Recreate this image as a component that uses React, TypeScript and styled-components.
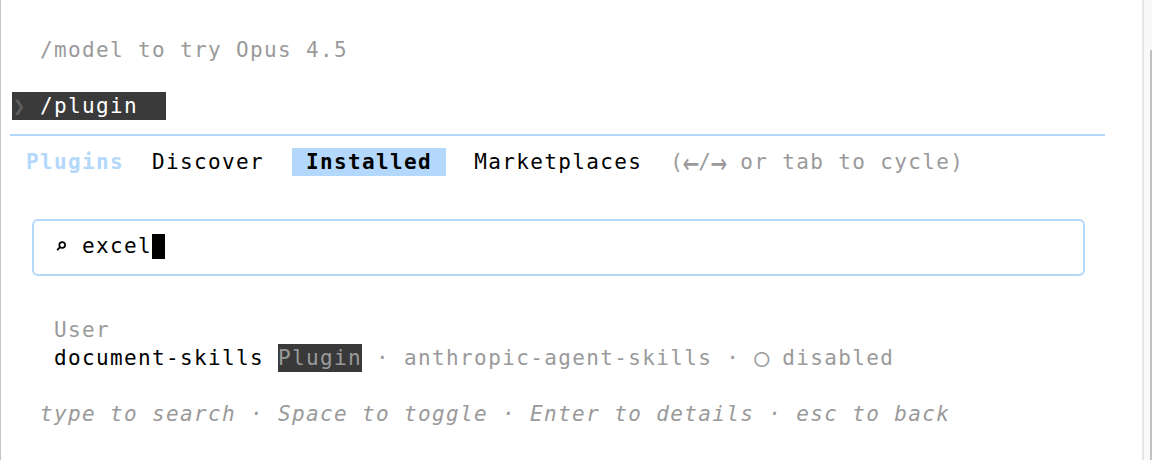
import styled, { createGlobalStyle } from "styled-components"

const GlobalStyle = createGlobalStyle`
  html, body {
    margin: 0;
    padding: 0;
    background: #ffffff;
    overflow: hidden;
  }
`

const BLUE = "#b3d8fb"
const GRAY = "#9a9a9a"

const Window = styled.div`
  display: flex;
  width: 1152px;
  height: 460px;
`

const Terminal = styled.div`
  flex: 1;
  border-left: 1px solid #c4c4c4;
  padding: 36px 0 0 11px;
  font-family: "DejaVu Sans Mono", "Liberation Mono", monospace;
  font-size: 21px;
  letter-spacing: 1.36px;
  color: #000;
`

const Gutter = styled.div`
  width: 8px;
  border-left: 2px solid #e6e6e6;
  background: #f9f9f9;
  padding-top: 50px;
  display: flex;
  justify-content: flex-end;
`

const Thumb = styled.div`
  width: 2px;
  background: #c2c2c2;
`

const Row = styled.div`
  height: 28px;
  line-height: 28px;
  white-space: pre;
  display: flex;
  align-items: center;
`

const Text = styled.span<{ $tone?: "gray" | "blue" | "dim" | "white"; $bold?: boolean; $italic?: boolean }>`
  color: ${(p) =>
    p.$tone === "gray"
      ? GRAY
      : p.$tone === "blue"
        ? BLUE
        : p.$tone === "dim"
          ? "#5e5e5e"
          : p.$tone === "white"
            ? "#fff"
            : "#000"};
  font-weight: ${(p) => (p.$bold ? 700 : 400)};
  font-style: ${(p) => (p.$italic ? "italic" : "normal")};
`

const Highlight = styled.span<{ $bg: string }>`
  display: inline-flex;
  align-items: center;
  height: 28px;
  background: ${(p) => p.$bg};
`

const Cell = styled.span<{ $size?: number }>`
  display: inline-block;
  width: 14px;
  letter-spacing: 0;
  text-align: center;
  font-size: ${(p) => p.$size ?? 21}px;
  line-height: 28px;
  height: 28px;
`

const Arrow = styled(Cell)`
  transform: scale(1.3, 1.7);
`

const Cursor = styled.span`
  display: inline-block;
  width: 13px;
  height: 25px;
  margin-right: 1px;
  background: #000;
`

const Rule = styled.div`
  width: 1095px;
  height: 2px;
  margin: 1px 0 0 -2px;
  background: ${BLUE};
`

const SearchBox = styled.div`
  margin: 15px 0 12px 20px;
  width: 1053px;
  height: 57px;
  border: 2px solid ${BLUE};
  border-radius: 6px;
  padding: 11px 0 0 20px;
  box-sizing: border-box;
`

const SearchIcon = () => (
  <Cell>
    <svg width="14" height="28" viewBox="0 0 14 28" style={{ display: "block" }}>
      <circle cx="8.2" cy="13" r="2.9" fill="none" stroke="#000" strokeWidth="1.7" />
      <line x1="6.1" y1="15.1" x2="3.6" y2="17.6" stroke="#000" strokeWidth="1.8" strokeLinecap="round" />
    </svg>
  </Cell>
)

const Dot = () => <Text $tone="gray"> · </Text>

export default function App() {
  return (
    <Window>
      <GlobalStyle />
      <Terminal>
        <Row>
          <Text $tone="gray">{"  /model to try Opus 4.5"}</Text>
        </Row>
        <Row />
        <Row>
          <Highlight $bg="#3a3a3a">
            <Cell>
              <Text $tone="dim">❯</Text>
            </Cell>
            <Text $tone="white">{" /plugin  "}</Text>
          </Highlight>
        </Row>
        <Row>
          <Rule />
        </Row>
        <Row>
          <Text>{" "}</Text>
          <Text $tone="blue" $bold>
            Plugins
          </Text>
          <Text>{"  Discover  "}</Text>
          <Highlight $bg={BLUE}>
            <Text $bold>{" Installed "}</Text>
          </Highlight>
          <Text>{"  Marketplaces  "}</Text>
          <Text $tone="gray">(</Text>
          <Arrow>
            <Text $tone="gray">←</Text>
          </Arrow>
          <Text $tone="gray">/</Text>
          <Arrow>
            <Text $tone="gray">→</Text>
          </Arrow>
          <Text $tone="gray">{" or tab to cycle)"}</Text>
        </Row>
        <Row />
        <SearchBox>
          <Row>
            <SearchIcon />
            <Text>{" excel"}</Text>
            <Cursor />
          </Row>
        </SearchBox>
        <Row />
        <Row>
          <Text $tone="gray">{"   User"}</Text>
        </Row>
        <Row>
          <Text>{"   document-skills "}</Text>
          <Highlight $bg="#393939">
            <Text $tone="gray">Plugin</Text>
          </Highlight>
          <Dot />
          <Text $tone="gray">anthropic-agent-skills</Text>
          <Dot />
          <Cell $size={25}>
            <Text $tone="gray">○</Text>
          </Cell>
          <Text $tone="gray">{" disabled"}</Text>
        </Row>
        <Row />
        <Row>
          <Text $tone="gray" $italic>
            {"  type to search · Space to toggle · Enter to details · esc to back"}
          </Text>
        </Row>
      </Terminal>
      <Gutter>
        <Thumb />
      </Gutter>
    </Window>
  )
}
